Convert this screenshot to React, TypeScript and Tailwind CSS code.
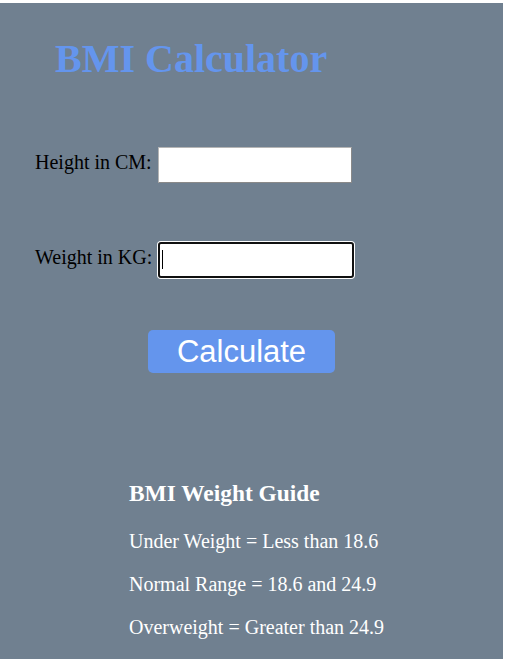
export default function App() {
  return (
    <div className="min-h-screen bg-white pt-[3px] font-['Liberation_Serif',serif]">
      <div className="w-[503px] min-h-[656px] bg-[#708090] pt-[33px] pb-[20px]">
        <h1 className="ml-[55px] text-[40px] leading-[46px] font-bold text-[#6495ED]">
          BMI Calculator
        </h1>

        <div className="mt-[65px] ml-[35px] flex items-start">
          <label className="mt-[4px] w-[123px] text-[20px] leading-[23px] text-black">
            Height in CM:
          </label>
          <input
            type="text"
            className="h-[36px] w-[194px] border border-[#8a8a8a] border-t-[#b5b5b5] border-l-[#b5b5b5] bg-white outline-none"
          />
        </div>

        <div className="mt-[59px] ml-[35px] flex items-start">
          <label className="mt-[4px] w-[123px] text-[20px] leading-[23px] text-black">
            Weight in KG:
          </label>
          <div className="relative">
            <input
              type="text"
              className="h-[36px] w-[196px] rounded-[3px] border-2 border-[#101010] bg-white shadow-[0_0_0_1px_white] outline-none"
            />
            <span className="pointer-events-none absolute left-[4px] top-[8px] h-[19px] w-px bg-black" />
          </div>
        </div>

        <button className="mt-[52px] ml-[148px] h-[43px] w-[187px] rounded-[5px] bg-[#6495ED] font-['Liberation_Sans',Arial,sans-serif] text-[31px] leading-[43px] text-white">
          Calculate
        </button>

        <div className="mt-[107px] ml-[129px] text-white">
          <h3 className="text-[23.4px] leading-[27px] font-bold">BMI Weight Guide</h3>
          <p className="mt-[23px] text-[20px] leading-[23px]">Under Weight = Less than 18.6</p>
          <p className="mt-[20px] text-[20px] leading-[23px]">Normal Range = 18.6 and 24.9</p>
          <p className="mt-[20px] text-[20px] leading-[23px]">Overweight = Greater than 24.9</p>
        </div>
      </div>
    </div>
  );
}
